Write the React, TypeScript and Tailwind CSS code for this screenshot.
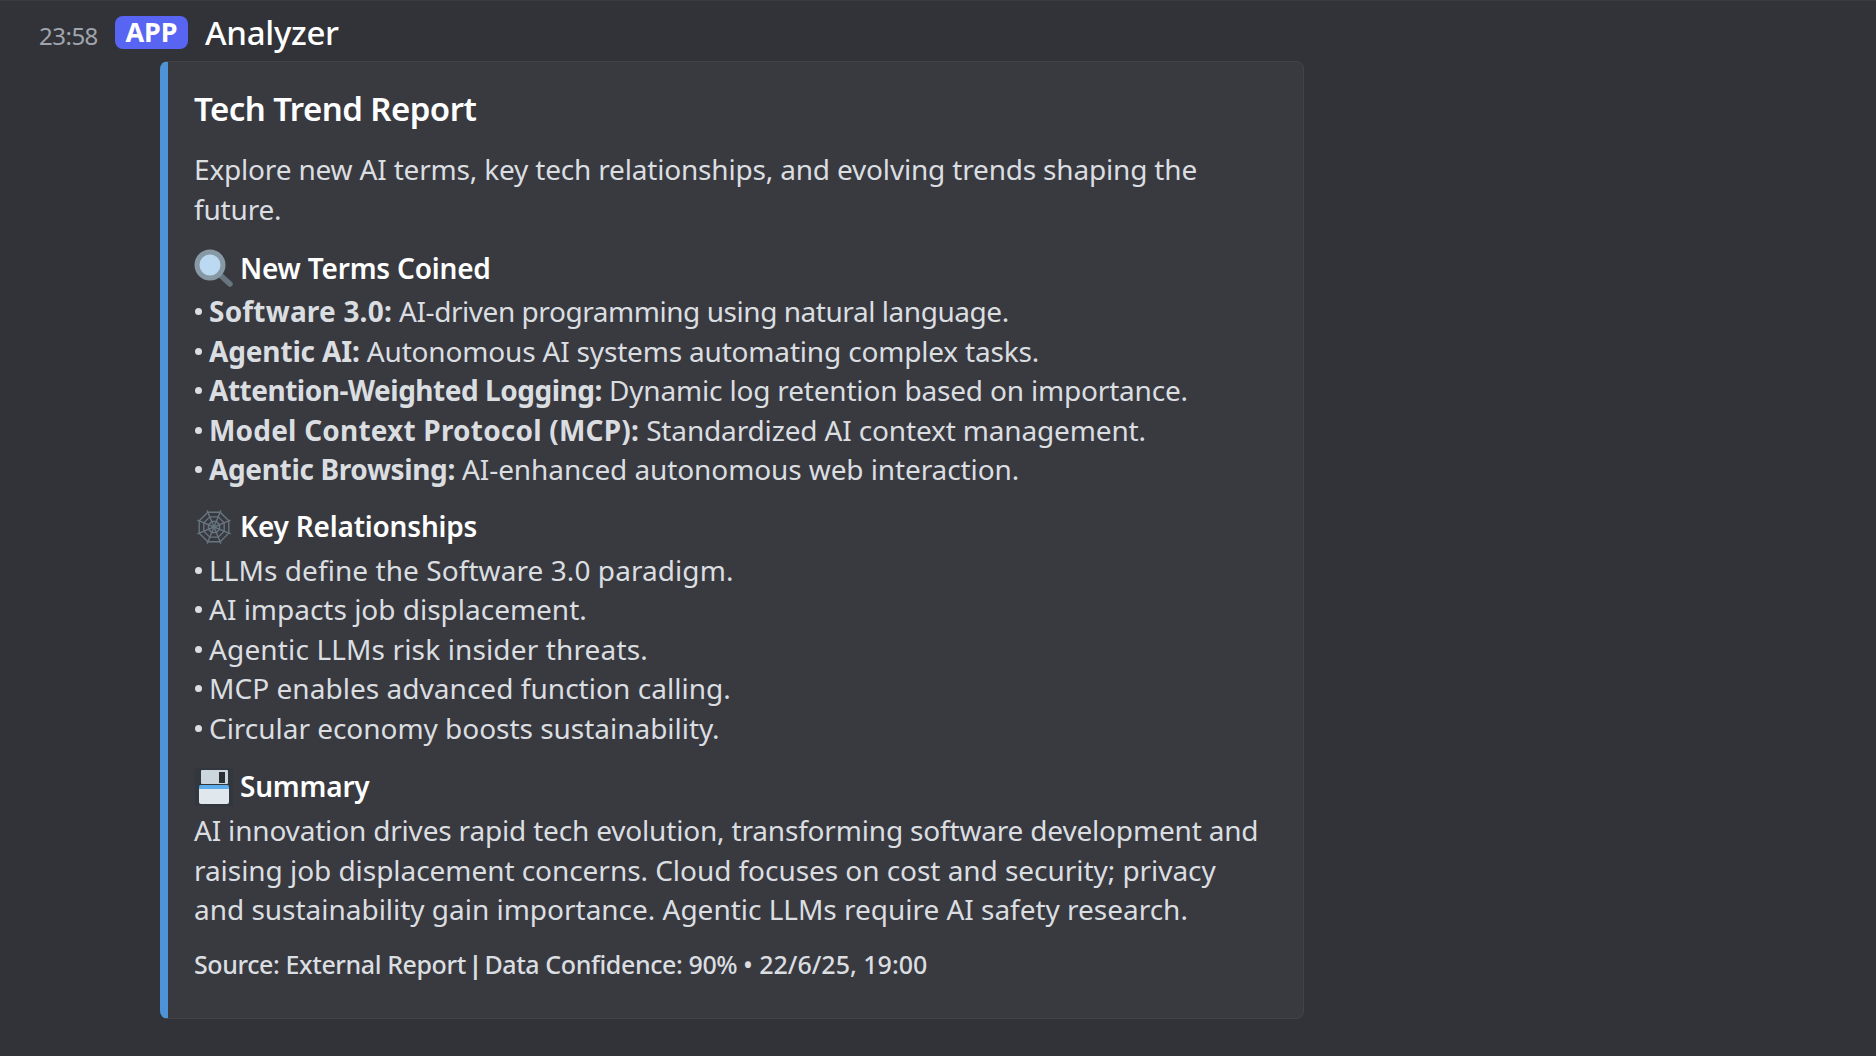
import React from "react";

const SearchIcon = () => (
  <svg viewBox="0 0 40 40" className="h-[40px] w-[40px] shrink-0">
    <line x1="25" y1="25" x2="36" y2="35" stroke="#66757f" strokeWidth="5.5" strokeLinecap="round" />
    <circle cx="16" cy="16" r="13" fill="#bbdaf2" stroke="#8899a6" strokeWidth="5" />
  </svg>
);

const WebIcon = () => {
  const spokes = [0, 45, 90, 135, 180, 225, 270, 315];
  const rings = [6, 11, 16];
  const pt = (r: number, deg: number) => {
    const a = ((deg + 22.5) * Math.PI) / 180;
    return `${20 + r * Math.cos(a)},${20 + r * Math.sin(a)}`;
  };
  return (
    <svg viewBox="0 0 40 40" className="h-[40px] w-[40px] shrink-0" fill="none" stroke="#66757f" strokeWidth="1.4">
      {spokes.map((d) => (
        <polyline key={d} points={`20,20 ${pt(18, d)}`} />
      ))}
      {rings.map((r) => (
        <polygon key={r} points={spokes.map((d) => pt(r, d)).join(" ")} />
      ))}
    </svg>
  );
};

const SaveIcon = () => (
  <svg viewBox="0 0 40 40" className="h-[40px] w-[40px] shrink-0">
    <rect x="1" y="1" width="38" height="38" rx="2" fill="#31373d" />
    <rect x="7" y="3" width="27" height="14" rx="1" fill="#ccd6dd" />
    <rect x="25" y="5" width="6" height="11" fill="#292f33" />
    <path d="M5 20a2 2 0 0 1 2-2h26a2 2 0 0 1 2 2v3H5z" fill="#5dadec" />
    <path d="M5 22h30v13a2 2 0 0 1-2 2H7a2 2 0 0 1-2-2z" fill="#e1e8ed" />
  </svg>
);

const terms = [
  { label: "Software 3.0:", text: "AI-driven programming using natural language.", fit: "tracking-[0.2px]", textFit: "tracking-[-0.45px]" },
  { label: "Agentic AI:", text: "Autonomous AI systems automating complex tasks.", fit: "tracking-[-0.15px]", textFit: "tracking-[-0.18px]" },
  { label: "Attention-Weighted Logging:", text: "Dynamic log retention based on importance.", fit: "tracking-[-0.48px]", textFit: "tracking-[-0.18px]" },
  { label: "Model Context Protocol (MCP):", text: "Standardized AI context management.", fit: "tracking-[0.2px]", textFit: "tracking-[-0.15px]" },
  { label: "Agentic Browsing:", text: "AI-enhanced autonomous web interaction.", fit: "tracking-[-0.35px]", textFit: "tracking-[-0.1px]" },
];

const relationships = [
  { text: "LLMs define the Software 3.0 paradigm.", fit: "tracking-[0.07px]" },
  { text: "AI impacts job displacement.", fit: "tracking-[-0.01px]" },
  { text: "Agentic LLMs risk insider threats.", fit: "tracking-[0.14px]" },
  { text: "MCP enables advanced function calling.", fit: "tracking-[0.04px]" },
  { text: "Circular economy boosts sustainability.", fit: "tracking-[-0.03px]" },
];

const Heading = ({ icon, children }: { icon: React.ReactNode; children: React.ReactNode }) => (
  <div className="flex h-[45px] items-center gap-[6px] text-[28px] font-semibold tracking-[-0.2px] text-white">
    {icon}
    <span>{children}</span>
  </div>
);

const Bullet = ({ children }: { children: React.ReactNode }) => (
  <div className="flex h-[39.5px] items-center pt-[2px] whitespace-nowrap">
    <span className="mr-[7px] ml-[1px] inline-block h-[7px] w-[7px] rounded-full bg-[#dbdee1]" />
    <span>{children}</span>
  </div>
);

export default function App() {
  return (
    <div
      className="h-[1056px] w-[1876px] overflow-hidden border-t border-[#3a3b41] bg-[#313338] pt-[10px] pl-[39px] text-[#dbdee1]"
      style={{ fontFamily: '"Noto Sans", sans-serif' }}
    >
      <div className="flex h-[44px] items-center">
        <span className="mt-[5px] w-[76px] text-[24px] tracking-[-0.5px] text-[#a0a5ad]">23:58</span>
        <span className="-mt-[1px] flex h-[33px] w-[73px] items-center justify-center rounded-[8px] bg-[#5865f2] text-[27px] font-bold text-white">
          APP
        </span>
        <span className="ml-[17px] text-[33px] font-medium tracking-[-0.3px] text-white">Analyzer</span>
      </div>

      <div className="mt-[6px] ml-[121px] h-[958px] w-[1144px] rounded-[8px] border-y border-r border-l-[8px] border-y-[#43444b] border-r-[#43444b] border-l-[#4e93d8] bg-[#393a40] pt-[23px] pl-[26px] text-[28px] leading-[39.5px] tracking-[-0.18px]">
        <div className="text-[33px] leading-[48px] font-semibold tracking-[-0.55px] text-white">Tech Trend Report</div>
        <div className="mt-[17px] w-[1070px]">
          Explore new AI terms, key tech relationships, and evolving trends shaping the future.
        </div>

        <div className="mt-[17px]">
          <Heading icon={<SearchIcon />}>New Terms Coined</Heading>
          {terms.map((row) => (
            <Bullet key={row.label}>
              <b className={`font-bold ${row.fit}`}>{row.label}</b> <span className={row.textFit}>{row.text}</span>
            </Bullet>
          ))}
        </div>

        <div className="mt-[16px]">
          <Heading icon={<WebIcon />}>Key Relationships</Heading>
          {relationships.map((row) => (
            <Bullet key={row.text}>
              <span className={row.fit}>{row.text}</span>
            </Bullet>
          ))}
        </div>

        <div className="mt-[17px]">
          <Heading icon={<SaveIcon />}>Summary</Heading>
          <div className="mt-[2px] whitespace-nowrap">
            <div>AI innovation drives rapid tech evolution, transforming software development and</div>
            <div className="tracking-[-0.05px]">raising job displacement concerns. Cloud focuses on cost and security; privacy</div>
            <div className="tracking-[-0.02px]">and sustainability gain importance. Agentic LLMs require AI safety research.</div>
          </div>
        </div>

        <div className="mt-[16px] text-[25px] leading-[36px] font-medium tracking-[-0.4px]">
          Source: External Report <span className="mx-[-3.5px] font-bold">|</span> Data Confidence: 90%{" "}
          <span className="tracking-[0px]">• 22/6/25, 19:00</span>
        </div>
      </div>
    </div>
  );
}
